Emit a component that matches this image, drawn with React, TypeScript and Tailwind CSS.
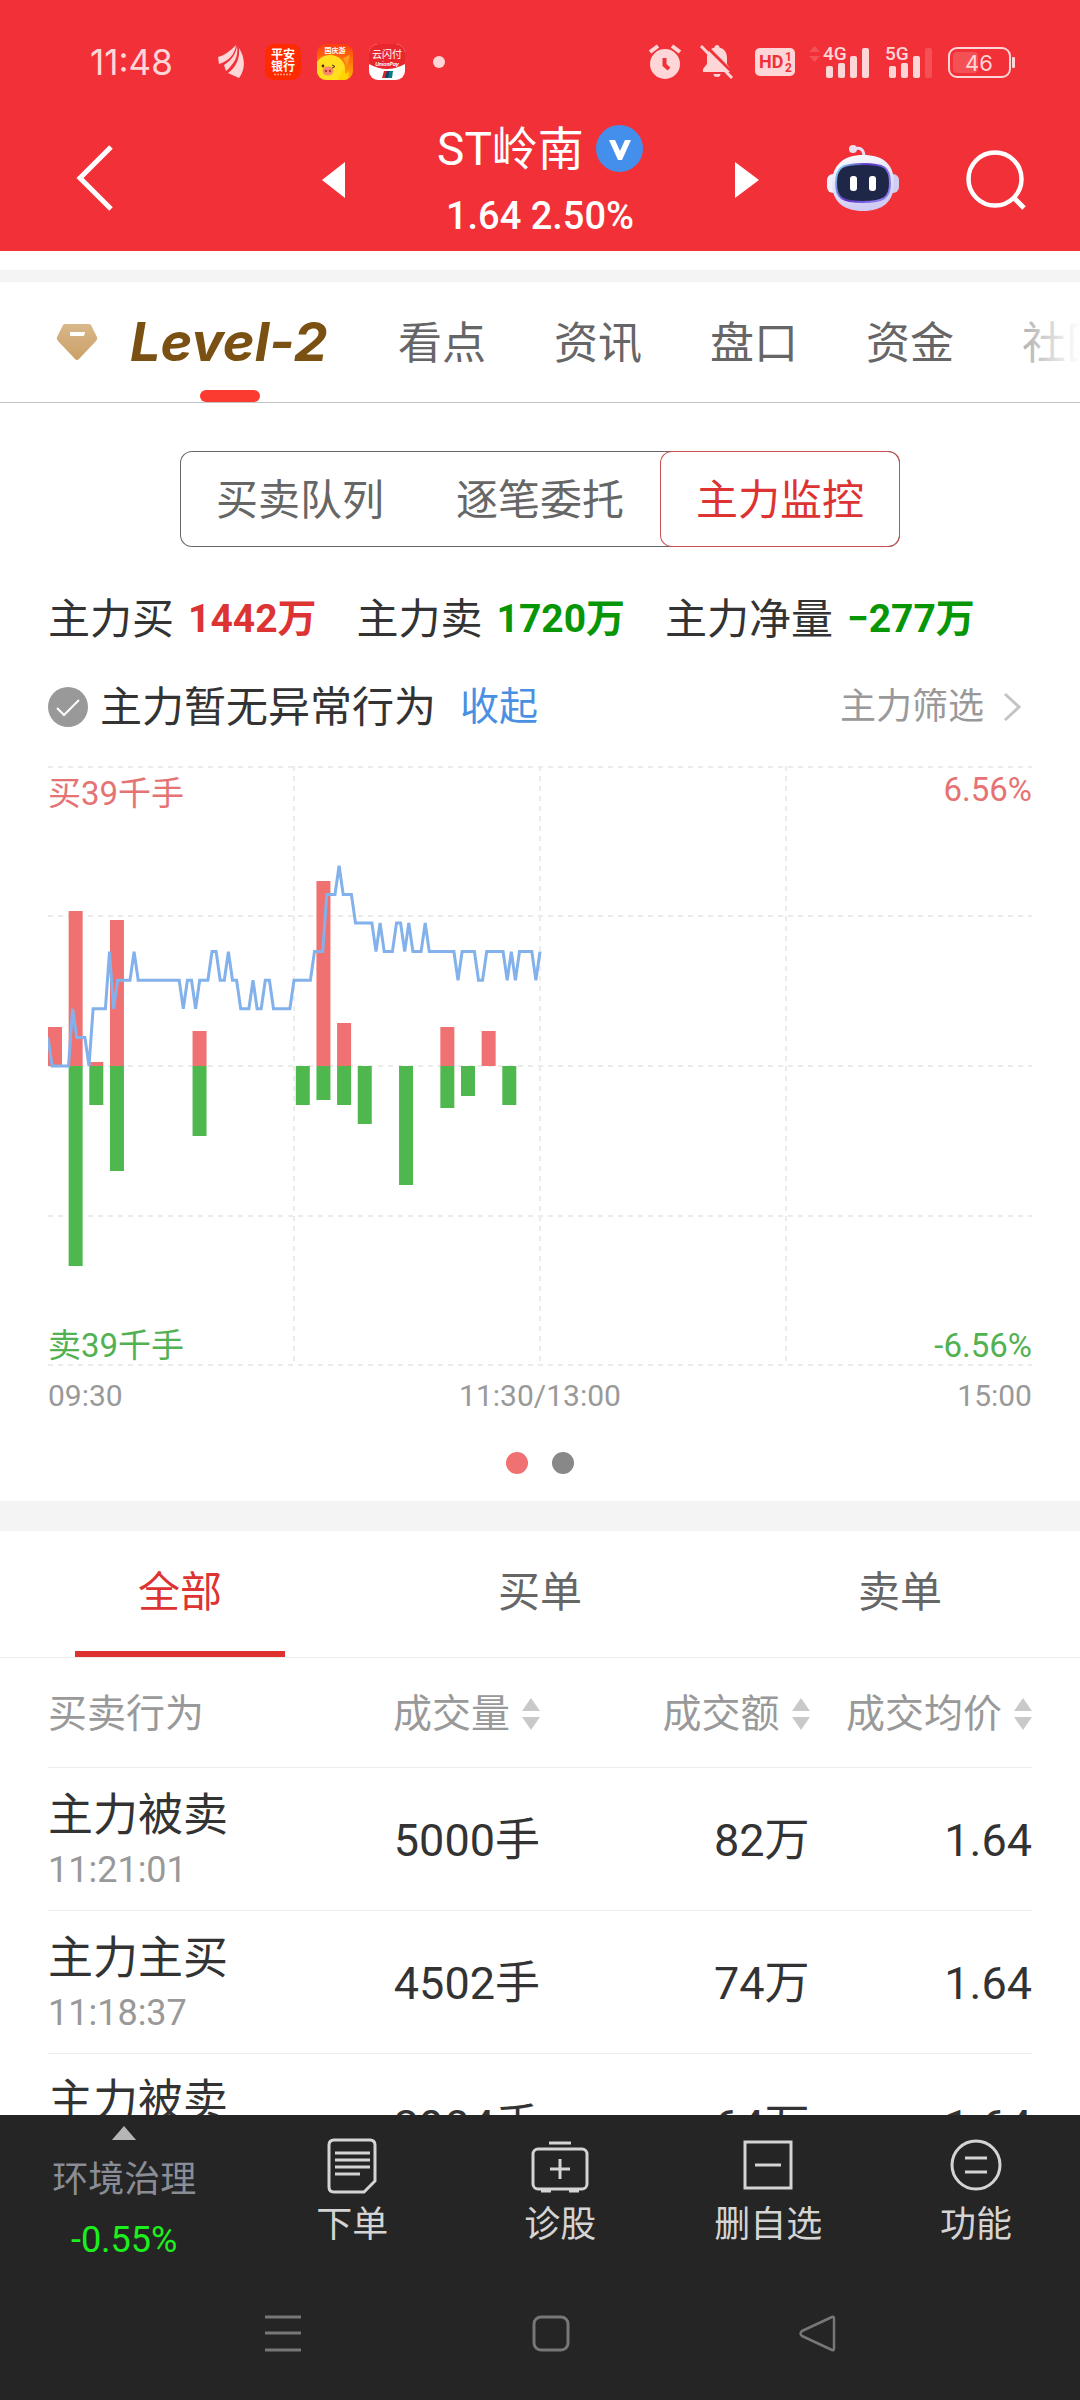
import React, { useState } from 'react';

// Price line: one [minute, level] pair at each turn, a level is one tick (0.01) above yesterday's close
const PRICE_POINTS: [number, number][] = [
  [0, 1], [1, 0], [5, 0], [6, 2], [7, 1], [9, 1], [10, 0], [11, 2], [14, 2], [15, 4], [16, 2], [17, 3],
  [20, 3], [21, 4], [22, 3], [32, 3], [33, 2], [34, 3], [35, 3], [36, 2], [37, 3], [39, 3], [40, 4],
  [41, 4], [42, 3], [43, 3], [44, 4], [45, 3], [46, 3], [47, 2], [49, 2], [50, 3], [51, 2], [52, 2],
  [53, 3], [54, 3], [55, 2], [59, 2], [60, 3], [64, 3], [65, 4], [67, 4], [68, 6], [70, 6], [71, 7],
  [72, 6], [74, 6], [75, 5], [79, 5], [80, 4], [81, 5], [82, 4], [84, 4], [85, 5], [86, 5], [87, 4],
  [88, 5], [89, 4], [91, 4], [92, 5], [93, 4], [99, 4], [100, 3], [101, 4], [104, 4], [105, 3],
  [106, 3], [107, 4], [111, 4], [112, 3], [113, 4], [114, 3], [115, 4], [118, 4], [119, 3], [120, 4],
];

const BARS = [
  { slot: 0, buy: 39, sell: 0 },
  { slot: 1, buy: 155, sell: 200 },
  { slot: 2, buy: 4, sell: 39 },
  { slot: 3, buy: 146, sell: 105 },
  { slot: 7, buy: 35, sell: 70 },
  { slot: 12, buy: 0, sell: 39 },
  { slot: 13, buy: 185, sell: 34 },
  { slot: 14, buy: 43, sell: 39 },
  { slot: 15, buy: 0, sell: 58 },
  { slot: 17, buy: 0, sell: 119 },
  { slot: 19, buy: 39, sell: 42 },
  { slot: 20, buy: 0, sell: 30 },
  { slot: 21, buy: 35, sell: 0 },
  { slot: 22, buy: 0, sell: 39 },
];

const ORDERS = [
  { action: '主力被卖', time: '11:21:01', volume: '5000手', amount: '82万', price: '1.64' },
  { action: '主力主买', time: '11:18:37', volume: '4502手', amount: '74万', price: '1.64' },
  { action: '主力被卖', time: '11:16:22', volume: '3904手', amount: '64万', price: '1.64' },
];

const StatusBar = () => (
  <div className="flex h-[116px] items-center justify-between pl-[90px] pr-16 pt-2 text-[#ffd6d8]">
    <div className="flex items-center">
      <span className="w-32 font-['Inter',sans-serif] text-[35px] leading-none">11:48</span>
      <svg width="26" height="34" viewBox="0 0 26 34" fill="currentColor">
        <path d="M0 12C7 10 12 6 18 0C17 9 11 16 1 19Z" />
        <path d="M19 1C21 12 15 20 8 26L6 20C13 16 18 9 19 1Z" />
        <path d="M21 3C28 14 27 25 21 33C18 31 13 30 10 28C18 22 22 14 21 3Z" />
      </svg>
      <div className="ml-[21px] flex gap-4">
        <svg width="36" height="36" viewBox="0 0 36 36">
          <rect width="36" height="36" rx="9" fill="#ff2b00" />
          <g fill="#fff" fontFamily="Noto Sans CJK SC, sans-serif" fontWeight="700" textAnchor="middle">
            <text x="18" y="15" fontSize="12">平安</text>
            <text x="18" y="27" fontSize="12">银行</text>
          </g>
          <path d="M9 30.500H27" stroke="#ff9a80" strokeWidth="1.500" strokeDasharray="2 1" />
        </svg>
        <svg width="36" height="36" viewBox="0 0 36 36">
          <defs>
            <linearGradient id="pig" x1="0" y1="0" x2="0" y2="1">
              <stop offset="0" stopColor="#ff3c14" />
              <stop offset="1" stopColor="#ffb400" />
            </linearGradient>
            <clipPath id="pigClip">
              <rect width="36" height="36" rx="9" />
            </clipPath>
          </defs>
          <g clipPath="url(#pigClip)">
            <rect width="36" height="36" fill="url(#pig)" />
            <path d="M26 14L33 11L30 22Z" fill="#ff9d1c" />
            <ellipse cx="13" cy="25" rx="15" ry="14" fill="#ffdf1f" />
            <path d="M22 33L26 25L29 30L32 27L31 36H21Z" fill="#ffd400" />
            <ellipse cx="11" cy="27" rx="5.500" ry="4.500" fill="#f88a6e" />
            <circle cx="9" cy="27" r="1.200" fill="#b53a2c" />
            <circle cx="13" cy="27" r="1.200" fill="#b53a2c" />
            <circle cx="6" cy="22" r="1.400" fill="#4a2a10" />
            <path d="M15 21L18 22.500L15 24" stroke="#4a2a10" strokeWidth="1" fill="none" />
            <text x="18" y="9" fontSize="7" fontWeight="700" fill="#fff" textAnchor="middle" fontFamily="Noto Sans CJK SC, sans-serif">国庆游</text>
          </g>
        </svg>
        <svg width="36" height="36" viewBox="0 0 36 36">
          <rect width="36" height="36" rx="9" fill="#fff" />
          <path d="M0 20V9A9 9 0 0 1 9 0H27A9 9 0 0 1 36 9V20Q18 30 0 20Z" fill="#e8262d" />
          <text x="18" y="14" fontSize="10" fill="#fff" textAnchor="middle" fontFamily="Noto Sans CJK SC, sans-serif">云闪付</text>
          <text x="18" y="22" fontSize="5" fontWeight="700" fontStyle="italic" fill="#fff" textAnchor="middle" fontFamily="Inter, sans-serif">UnionPay</text>
          <path d="M15 27H19L18 34H13Z" fill="#d8232a" />
          <path d="M18 27H21L20 34H16Z" fill="#12406f" />
          <path d="M21 27H24L23 34H19Z" fill="#0c7e7a" />
        </svg>
      </div>
      <span className="ml-7 size-3 rounded-full bg-current" />
    </div>

    <div className="flex items-center">
      <svg width="34" height="36" viewBox="0 0 34 36">
        <circle cx="17" cy="20" r="15" fill="currentColor" />
        <path d="M2 8L10 2M24 2L32 8" stroke="currentColor" strokeWidth="4" />
        <path d="M16.500 14V21L21 25" fill="none" stroke="#f23037" strokeWidth="4" />
      </svg>
      <svg className="ml-[18px]" width="34" height="36" viewBox="0 0 34 36" fill="currentColor">
        <path d="M17 1C18.500 1 19.500 2 19.500 3.500C25 5 27 9 27 14V20L31 26V28H3V25L7 20V14C7 9 9 5 14.500 3.500C14.500 2 15.500 1 17 1Z" />
        <path d="M13.500 30H20.500A3.500 3 0 0 1 13.500 30Z" />
        <path d="M3 -1L36 32" stroke="#f23037" strokeWidth="3" />
        <path d="M1 2L32 34" stroke="currentColor" strokeWidth="3" />
      </svg>
      <svg className="ml-[21px]" width="40" height="30" viewBox="0 0 40 30">
        <rect y="1" width="40" height="28" rx="5" fill="currentColor" />
        <g fill="#f23037" fontFamily="Roboto, sans-serif" fontWeight="700">
          <text x="4" y="21" fontSize="18">HD</text>
          <text x="30" y="14" fontSize="12">1</text>
          <text x="30" y="25" fontSize="12">2</text>
        </g>
      </svg>
      <svg className="ml-3" width="64" height="36" viewBox="0 0 64 36" fill="currentColor">
        <path d="M2 8L7.500 2L13 8ZM2 12L7.500 18L13 12Z" opacity="0.200" />
        <text x="16" y="16" fontSize="19" fontWeight="500" fontFamily="Roboto, sans-serif">4G</text>
        <rect x="19" y="22" width="7" height="12" rx="2" />
        <rect x="31" y="19" width="7" height="15" rx="2" />
        <rect x="43" y="12" width="7" height="22" rx="2" />
        <rect x="55" y="4" width="7" height="30" rx="2" />
      </svg>
      <svg className="ml-3" width="50" height="36" viewBox="0 0 50 36" fill="currentColor">
        <text x="2" y="16" fontSize="19" fontWeight="500" fontFamily="Roboto, sans-serif">5G</text>
        <rect x="6" y="22" width="7" height="12" rx="2" />
        <rect x="18" y="19" width="7" height="15" rx="2" />
        <rect x="30" y="12" width="7" height="22" rx="2" />
        <rect x="42" y="4" width="7" height="30" rx="2" opacity="0.200" />
      </svg>
      <svg className="ml-[15px]" width="68" height="34" viewBox="0 0 68 34">
        <rect x="1" y="3" width="61" height="29" rx="8" fill="none" stroke="currentColor" strokeWidth="2" />
        <rect x="5" y="7" width="25" height="21" rx="4" fill="currentColor" opacity="0.200" />
        <rect x="64" y="12" width="3" height="11" rx="1" fill="currentColor" />
        <text x="31" y="26" fontSize="22" textAnchor="middle" fill="currentColor" fontFamily="Inter, sans-serif">46</text>
      </svg>
    </div>
  </div>
);

const Robot = () => (
  <svg width="72" height="68" viewBox="0 0 72 68">
    <defs>
      <linearGradient id="shell" x1="0" y1="0" x2="0.300" y2="1">
        <stop offset="0" stopColor="#ffffff" />
        <stop offset="1" stopColor="#cfcbf2" />
      </linearGradient>
      <linearGradient id="rim" x1="0" y1="0" x2="1" y2="0.400">
        <stop offset="0" stopColor="#8fe3f5" />
        <stop offset="0.500" stopColor="#5a35c9" />
        <stop offset="1" stopColor="#8a7cf0" />
      </linearGradient>
    </defs>
    <path d="M27 5Q37 2 37 13" fill="none" stroke="#e6dff5" strokeWidth="3" />
    <circle cx="26" cy="5" r="4" fill="#eadff0" />
    <rect x="0" y="30" width="12" height="19" rx="6" fill="#f1effb" />
    <rect x="60" y="30" width="12" height="19" rx="6" fill="#cfcdf0" />
    <path d="M36 11C57 11 67 21 67 39C67 58 55 67 36 67C17 67 5 58 5 39C5 21 17 11 36 11Z" fill="url(#shell)" />
    <path d="M36 20C57 20 63 23 63 39C63 54 57 58 36 58C15 58 9 54 9 39C9 23 15 20 36 20Z" fill="#1e2748" stroke="url(#rim)" strokeWidth="2" />
    <rect x="23" y="32" width="7" height="15" rx="3" fill="#fff" />
    <rect x="42" y="32" width="7" height="15" rx="3" fill="#fff" />
  </svg>
);

const TitleBar = () => (
  <header className="grid h-[135px] grid-cols-[1fr_390px_1fr] items-center text-white">
    <div className="flex items-center justify-between pb-2 pl-[76px]">
      <button type="button" aria-label="返回" className="-mt-1">
        <svg width="38" height="66" viewBox="0 0 38 66" fill="none" stroke="currentColor" strokeWidth="5">
          <path d="M35 2L4 33L35 64" />
        </svg>
      </button>
      <button type="button" aria-label="上一只">
        <svg width="23" height="36" viewBox="0 0 23 36" fill="currentColor">
          <path d="M23 0V36L0 18Z" />
        </svg>
      </button>
    </div>
    <div className="text-center">
      <h1 className="flex items-center justify-center gap-3 text-[46px] leading-[64px]">
        ST岭南
        <svg width="47" height="47" viewBox="0 0 47 47">
          <circle cx="23.500" cy="23.500" r="23.500" fill="#448fec" />
          <path d="M13 15H19L24 26L29 15H35L26 35H22Z" fill="#fff" />
        </svg>
      </h1>
      <p className="text-[38px] font-medium leading-[70px]">1.64 2.50%</p>
    </div>
    <div className="flex items-center justify-between pb-2 pr-[54px]">
      <button type="button" aria-label="下一只">
        <svg width="24" height="36" viewBox="0 0 24 36" fill="currentColor">
          <path d="M0 0V36L24 18Z" />
        </svg>
      </button>
      <button type="button" aria-label="智能助手" className="-mt-1">
        <Robot />
      </button>
      <button type="button" aria-label="搜索">
        <svg width="60" height="60" viewBox="0 0 60 60" fill="none" stroke="currentColor">
          <circle cx="29" cy="29" r="26.500" strokeWidth="4.500" />
          <path d="M47 47L58 58" strokeWidth="5" />
        </svg>
      </button>
    </div>
  </header>
);

const SectionTabs = () => (
  <nav className="relative flex h-[121px] items-center gap-[68px] overflow-hidden border-b border-[#c4c4c4] pl-14 text-[44px] text-[#666]">
    <a href="#level2" className="relative flex h-full w-[274px] shrink-0 items-center gap-8">
      <svg width="42" height="38" viewBox="0 0 42 38">
        <defs>
          <linearGradient id="gem" x1="0" y1="0" x2="0" y2="1">
            <stop offset="0" stopColor="#d8b78a" />
            <stop offset="1" stopColor="#cba066" />
          </linearGradient>
        </defs>
        <path d="M9 1H33Q34 1 35 2L41 14Q42 16 40 18L23 36Q21 38 19 36L2 18Q0 16 1 14L7 2Q8 1 9 1Z" fill="url(#gem)" />
        <path d="M14 9H29L28 13H14Z" fill="#fff" />
      </svg>
      <span className="font-['Inter',sans-serif] text-[54px] font-bold italic leading-none text-[#7a5013]">Level-2</span>
      <span className="absolute bottom-0 left-36 h-3 w-[60px] rounded-full bg-[#fb3b30]" />
    </a>
    <a href="#view" className="shrink-0 pt-1">看点</a>
    <a href="#news" className="shrink-0 pt-1">资讯</a>
    <a href="#quote" className="shrink-0 pt-1">盘口</a>
    <a href="#funds" className="shrink-0 pt-1">资金</a>
    <a href="#community" className="shrink-0 pt-1">社区</a>
    <span className="absolute right-0 top-0 h-full w-20 bg-linear-to-r from-white/30 to-white" />
  </nav>
);

const Chart = () => (
  <div className="relative mt-[27px] text-[33px] leading-10">
    <svg className="block w-full" viewBox="0 0 984 600">
      <g stroke="#ebebeb" strokeWidth="2" strokeDasharray="5 5">
        {[1, 150, 300, 450, 599].map((y) => (
          <path key={y} d={`M0 ${y}H984`} />
        ))}
        {[246, 492, 738].map((x) => (
          <path key={x} d={`M${x} 0V600`} />
        ))}
      </g>
      {BARS.map(({ slot, buy, sell }) => (
        <g key={slot}>
          <rect x={slot * 20.65} y={300 - buy} width="14" height={buy} fill="#f07171" />
          <rect x={slot * 20.65} y="300" width="14" height={sell} fill="#4eb84e" />
        </g>
      ))}
      <polyline
        points={PRICE_POINTS.map(([minute, level]) => `${minute * 4.1},${300 - level * 28.6}`).join(' ')}
        fill="none"
        stroke="#82b1eb"
        strokeWidth="3"
      />
    </svg>
    <span className="absolute left-0 top-2 text-[#e57373]">买39千手</span>
    <span className="absolute right-0 top-1 text-[#e57373]">6.56%</span>
    <span className="absolute bottom-0 left-0 text-[#52b152]">卖39千手</span>
    <span className="absolute bottom-0 right-0 text-[#52b152]">-6.56%</span>
  </div>
);

const SortIcon = () => (
  <svg width="18" height="32" viewBox="0 0 18 32" fill="#c9c9c9">
    <path d="M9 0L18 13H0ZM9 32L18 19H0Z" />
  </svg>
);

const Index = () => {
  const [mode, setMode] = useState('主力监控');
  const [filter, setFilter] = useState('全部');

  return (
    <div className="flex h-screen flex-col bg-white font-['Roboto','Noto_Sans_CJK_SC',sans-serif] text-[#333]">
      <div className="shrink-0 bg-[#f23037]">
        <StatusBar />
        <TitleBar />
      </div>

      <main className="min-h-0 flex-1 overflow-y-auto [scrollbar-width:none]">
        <div className="mt-[19px] h-3 bg-[#f4f4f4]" />
        <SectionTabs />

        {/* Main force monitor */}
        <section className="px-12 pb-[27px] pt-12">
          <div className="mx-auto flex h-24 w-[720px] rounded-xl text-[42px] text-[#666] ring-1 ring-inset ring-[#666]">
            {['买卖队列', '逐笔委托', '主力监控'].map((name) => (
              <button
                key={name}
                type="button"
                onClick={() => setMode(name)}
                className={`flex-1 rounded-xl pt-0.5 ${mode === name ? 'text-[#dd3333] ring-1 ring-inset ring-[#c85050]' : ''}`}
              >
                {name}
              </button>
            ))}
          </div>

          <div className="mt-10 flex h-16 items-center gap-10 whitespace-nowrap text-[42px]">
            <p className="flex items-center gap-3.5">
              主力买 <b className="text-[39px] text-[#dd3333]">1442万</b>
            </p>
            <p className="flex items-center gap-3.5">
              主力卖 <b className="text-[39px] text-[#069606]">1720万</b>
            </p>
            <p className="flex items-center gap-3.5">
              主力净量 <b className="text-[39px] text-[#069606]">−277万</b>
            </p>
          </div>

          <div className="mt-6 flex h-16 items-center whitespace-nowrap text-[42px]">
            <svg width="40" height="40" viewBox="0 0 40 40">
              <circle cx="20" cy="20" r="20" fill="#999" />
              <path d="M9 21L16 28L31 13" fill="none" stroke="#fff" strokeWidth="2" />
            </svg>
            <span className="ml-3">主力暂无异常行为</span>
            <button type="button" className="ml-6 text-[39px] text-[#4a90e2]">收起</button>
            <button type="button" className="ml-auto flex items-center gap-[18px] pr-2.5 text-[36px] text-[#999]">
              主力筛选
              <svg width="20" height="30" viewBox="0 0 20 30" fill="none" stroke="#c4c4c4" strokeWidth="3">
                <path d="M3 2L17 15L3 28" />
              </svg>
            </button>
          </div>

          <Chart />
          <div className="mt-2 flex justify-between text-[30px] leading-[44px] text-[#999]">
            <span>09:30</span>
            <span>11:30/13:00</span>
            <span>15:00</span>
          </div>
          <div className="mt-[34px] flex justify-center gap-6">
            <span className="size-[22px] rounded-full bg-[#f07171]" />
            <span className="size-[22px] rounded-full bg-[#888]" />
          </div>
        </section>

        <div className="h-[30px] bg-[#f4f4f4]" />

        {/* Orders */}
        <div className="flex h-[127px] border-b border-[#ececec] text-[42px] text-[#666]">
          {['全部', '买单', '卖单'].map((name) => (
            <button
              key={name}
              type="button"
              onClick={() => setFilter(name)}
              className={`relative flex-1 pb-1 ${filter === name ? 'text-[#dd3333]' : ''}`}
            >
              {name}
              {filter === name && <span className="absolute inset-x-0 bottom-0 mx-auto h-1.5 w-[210px] bg-[#e03131]" />}
            </button>
          ))}
        </div>

        <div className="px-12">
          <table className="w-full table-fixed whitespace-nowrap text-right text-[45px]">
            <thead>
              <tr className="h-[109px] border-b border-[#ececec] text-[39px] text-[#999]">
                <th className="w-[25%] pt-1 text-left font-normal">买卖行为</th>
                <th className="w-[25%] pt-1 font-normal">
                  <button type="button" className="inline-flex items-center gap-3">成交量<SortIcon /></button>
                </th>
                <th className="w-[27.4%] pt-1 font-normal">
                  <button type="button" className="inline-flex items-center gap-3">成交额<SortIcon /></button>
                </th>
                <th className="pt-1 font-normal">
                  <button type="button" className="inline-flex items-center gap-3">成交均价<SortIcon /></button>
                </th>
              </tr>
            </thead>
            <tbody>
              {ORDERS.map((order) => (
                <tr key={order.time} className="border-b border-[#ececec]">
                  <td className="pb-3.5 pt-5 text-left">
                    <p className="leading-[56px]">{order.action}</p>
                    <p className="text-[36px] leading-[52px] text-[#999]">{order.time}</p>
                  </td>
                  <td className="pt-1">{order.volume}</td>
                  <td className="pt-1">{order.amount}</td>
                  <td className="pt-1">{order.price}</td>
                </tr>
              ))}
            </tbody>
          </table>
        </div>
      </main>

      <footer className="shrink-0 bg-[#252525] text-[36px] text-[#d4d4d4]">
        <nav className="flex h-[155px]">
          <a href="#industry" className="flex w-[23%] flex-col items-center pt-[11px] leading-[60px]">
            <svg width="26" height="15" viewBox="0 0 26 15" fill="#b5b5b5">
              <path d="M13 0L26 15H0Z" />
            </svg>
            <span className="mt-2.5 text-[#8a8d96]">环境治理</span>
            <span className="text-[#1cf01c]">-0.55%</span>
          </a>
          <a href="#order" className="flex flex-1 flex-col items-center pt-[18px] leading-[48px]">
            <svg width="64" height="64" viewBox="0 0 64 64" fill="none" stroke="currentColor" strokeWidth="3">
              <path d="M14 7H50Q55 7 55 12V48L44 59H14Q9 59 9 54V12Q9 7 14 7Z" />
              <path d="M15 20H50M15 27H50M15 34H50M15 41H40" />
            </svg>
            <span className="mt-1">下单</span>
          </a>
          <a href="#diagnose" className="flex flex-1 flex-col items-center pt-[18px] leading-[48px]">
            <svg width="64" height="64" viewBox="0 0 64 64" fill="none" stroke="currentColor" strokeWidth="3">
              <rect x="5" y="16" width="54" height="40" rx="5" />
              <path d="M21 10H43M22 36H42M32 26V46" />
              <path d="M13 58H23M41 58H51" />
            </svg>
            <span className="mt-1">诊股</span>
          </a>
          <a href="#remove" className="flex flex-1 flex-col items-center pt-[18px] leading-[48px]">
            <svg width="64" height="64" viewBox="0 0 64 64" fill="none" stroke="currentColor" strokeWidth="3">
              <rect x="9" y="9" width="46" height="46" />
              <path d="M19 32H45" />
            </svg>
            <span className="mt-1">删自选</span>
          </a>
          <a href="#more" className="flex flex-1 flex-col items-center pt-[18px] leading-[48px]">
            <svg width="64" height="64" viewBox="0 0 64 64" fill="none" stroke="currentColor" strokeWidth="3">
              <circle cx="32" cy="32" r="24" />
              <path d="M21 25H43M21 39H43" />
            </svg>
            <span className="mt-1">功能</span>
          </a>
        </nav>

        {/* System navigation */}
        <div className="flex h-[130px] items-center justify-between pl-[24%] pr-[22%] text-[#777]">
          <button type="button" aria-label="最近任务">
            <svg width="48" height="48" viewBox="0 0 48 48" fill="none" stroke="currentColor" strokeWidth="3">
              <path d="M6 6H42M6 22H42M6 39H42" />
            </svg>
          </button>
          <button type="button" aria-label="主屏幕">
            <svg width="48" height="48" viewBox="0 0 48 48" fill="none" stroke="currentColor" strokeWidth="3">
              <rect x="7" y="6" width="34" height="33" rx="7" />
            </svg>
          </button>
          <button type="button" aria-label="系统返回">
            <svg width="48" height="48" viewBox="0 0 48 48" fill="none" stroke="currentColor" strokeWidth="2.500" strokeLinejoin="round">
              <path d="M8 20L38 6Q40 5 40 8V37Q40 40 38 39L8 25Q5 22.500 8 20Z" />
            </svg>
          </button>
        </div>
      </footer>
    </div>
  );
};

export default Index;
